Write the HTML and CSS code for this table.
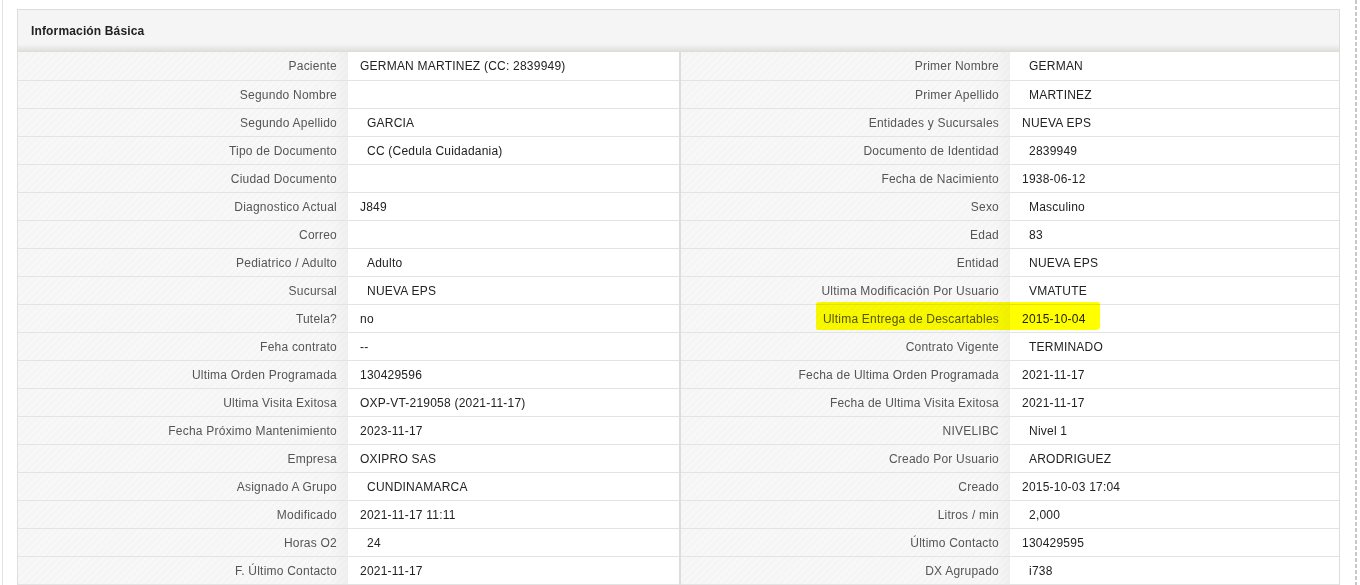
FILE: index.html
```html
<!DOCTYPE html>
<html lang="es">
<head>
<meta charset="utf-8">
<title>Información Básica</title>
<link rel="stylesheet" href="styles.css">
</head>
<body>
<div class="page">
  <div class="panel">
    <div class="panel-heading">Información Básica</div>
    <table class="info">
      <colgroup>
        <col class="c-label"><col class="c-value"><col class="c-label2"><col class="c-value2">
      </colgroup>
      <tbody>
        <tr><th>Paciente</th><td>GERMAN MARTINEZ (CC: 2839949)</td><th>Primer Nombre</th><td class="ind">GERMAN</td></tr>
        <tr><th>Segundo Nombre</th><td></td><th>Primer Apellido</th><td class="ind">MARTINEZ</td></tr>
        <tr><th>Segundo Apellido</th><td class="ind">GARCIA</td><th>Entidades y Sucursales</th><td>NUEVA EPS</td></tr>
        <tr><th>Tipo de Documento</th><td class="ind">CC (Cedula Cuidadania)</td><th>Documento de Identidad</th><td class="ind">2839949</td></tr>
        <tr><th>Ciudad Documento</th><td></td><th>Fecha de Nacimiento</th><td>1938-06-12</td></tr>
        <tr><th>Diagnostico Actual</th><td>J849</td><th>Sexo</th><td class="ind">Masculino</td></tr>
        <tr><th>Correo</th><td></td><th>Edad</th><td class="ind">83</td></tr>
        <tr><th>Pediatrico / Adulto</th><td class="ind">Adulto</td><th>Entidad</th><td class="ind">NUEVA EPS</td></tr>
        <tr><th>Sucursal</th><td class="ind">NUEVA EPS</td><th>Ultima Modificación Por Usuario</th><td class="ind">VMATUTE</td></tr>
        <tr><th>Tutela?</th><td>no</td><th>Ultima Entrega de Descartables</th><td>2015-10-04</td></tr>
        <tr><th>Feha contrato</th><td>--</td><th>Contrato Vigente</th><td class="ind">TERMINADO</td></tr>
        <tr><th>Ultima Orden Programada</th><td>130429596</td><th>Fecha de Ultima Orden Programada</th><td>2021-11-17</td></tr>
        <tr><th>Ultima Visita Exitosa</th><td>OXP-VT-219058 (2021-11-17)</td><th>Fecha de Ultima Visita Exitosa</th><td>2021-11-17</td></tr>
        <tr><th>Fecha Próximo Mantenimiento</th><td>2023-11-17</td><th>NIVELIBC</th><td class="ind">Nivel 1</td></tr>
        <tr><th>Empresa</th><td>OXIPRO SAS</td><th>Creado Por Usuario</th><td class="ind">ARODRIGUEZ</td></tr>
        <tr><th>Asignado A Grupo</th><td class="ind">CUNDINAMARCA</td><th>Creado</th><td>2015-10-03 17:04</td></tr>
        <tr><th>Modificado</th><td>2021-11-17 11:11</td><th>Litros / min</th><td class="ind">2,000</td></tr>
        <tr><th>Horas O2</th><td class="ind">24</td><th>Último Contacto</th><td>130429595</td></tr>
        <tr><th>F. Último Contacto</th><td>2021-11-17</td><th>DX Agrupado</th><td class="ind">i738</td></tr>
      </tbody>
    </table>
  </div>
</div>
<div class="highlight"></div>
</body>
</html>
```

FILE: styles.css
```css
html, body {
  margin: 0;
  padding: 0;
  background: #fff;
  font-family: "Liberation Sans", Arial, sans-serif;
  font-size: 12px;
  color: #333;
  height: 585px;
  overflow: hidden;
}

body {
  position: relative;
}

.page {
  margin-left: 2px;
  width: 1355px;
  height: 585px;
  border-left: 1px solid #e3e3e3;
  padding: 9px 0 0 14px;
  box-sizing: border-box;
  background: repeating-linear-gradient(to bottom, #c8c8c8 0 4px, transparent 4px 6px) right top / 2px 100% no-repeat;
}

.panel {
  width: 1323px;
  border: 1px solid #dddddd;
  border-bottom: none;
  box-sizing: border-box;
}

.panel-heading {
  height: 42px;
  box-sizing: border-box;
  padding: 14px 0 0 13px;
  font-weight: bold;
  color: #222;
  letter-spacing: 0.15px;
  background: linear-gradient(to bottom, #f5f5f5 0, #f5f5f5 34px, #ececea 37px, #dcdcd8 42px);
}

.info {
  width: 1321px;
  table-layout: fixed;
  border-collapse: collapse;
  letter-spacing: 0.22px;
}

.c-label { width: 330px; }
.c-value { width: 332px; }
.c-label2 { width: 330px; }
.c-value2 { width: 329px; }

.info th,
.info td {
  height: 27px;
  padding: 0;
  border-bottom: 1px solid #e3e3e3;
  white-space: nowrap;
  overflow: hidden;
  vertical-align: middle;
}

.info tr:first-child th,
.info tr:first-child td {
  height: 28px;
}

.info th {
  font-weight: normal;
  text-align: right;
  padding-right: 11px;
  color: #555;
  background-color: #f5f5f5;
  background-image:
    linear-gradient(to right, rgba(0,0,0,0) 0, rgba(0,0,0,0) 312px, rgba(0,0,0,0.03) 330px),
    repeating-linear-gradient(135deg, rgba(255,255,255,0.35) 0 2px, rgba(255,255,255,0) 2px 5px);
}

.info td {
  text-align: left;
  padding-left: 12px;
  color: #222;
  background: #fff;
}

.info td:nth-child(2) {
  border-right: 2px solid #dddddd;
}

.info td.ind {
  padding-left: 19px;
}

.highlight {
  position: absolute;
  left: 816px;
  top: 302px;
  width: 284px;
  height: 28px;
  border-radius: 3px 2px 4px 2px;
  background: #ffff00;
  mix-blend-mode: multiply;
}
```
